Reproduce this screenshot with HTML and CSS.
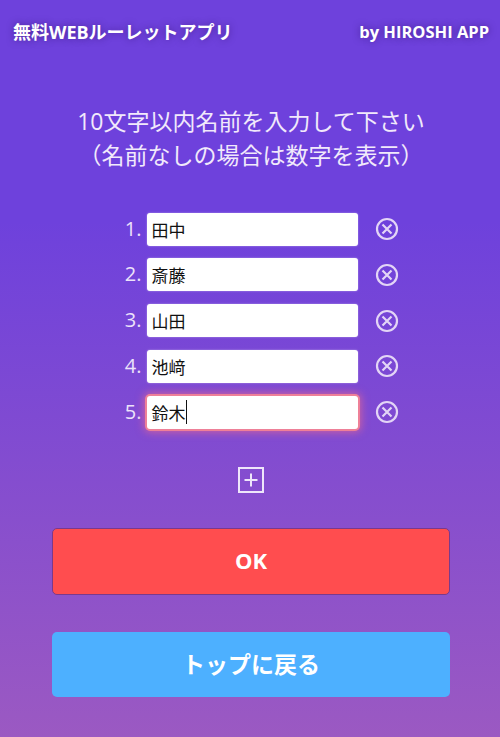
FILE: index.html
```html
<!DOCTYPE html>
<html lang="ja">
<head>
    <meta charset="UTF-8">
    <meta name="viewport" content="width=device-width, initial-scale=1.0">
    <title>無料WEBルーレットアプリ</title>
    <link rel="stylesheet" href="styles.css">
</head>
<body>
    <div class="container">
        <header class="header">
            <span class="title">無料WEBルーレットアプリ</span>
            <span class="author">by HIROSHI APP</span>
        </header>

        <p class="lead">10文字以内名前を入力して下さい<br>（名前なしの場合は数字を表示）</p>

        <div class="names">
            <div class="name-row">
                <span class="num">1.</span>
                <div class="name-input">田中</div>
                <svg class="remove" viewBox="0 0 24 24"><circle cx="12" cy="12" r="10"/><path d="M7.5 7.5l9 9M16.500 7.500l-9 9"/></svg>
            </div>
            <div class="name-row">
                <span class="num">2.</span>
                <div class="name-input">斎藤</div>
                <svg class="remove" viewBox="0 0 24 24"><circle cx="12" cy="12" r="10"/><path d="M7.5 7.5l9 9M16.500 7.500l-9 9"/></svg>
            </div>
            <div class="name-row">
                <span class="num">3.</span>
                <div class="name-input">山田</div>
                <svg class="remove" viewBox="0 0 24 24"><circle cx="12" cy="12" r="10"/><path d="M7.5 7.5l9 9M16.500 7.500l-9 9"/></svg>
            </div>
            <div class="name-row">
                <span class="num">4.</span>
                <div class="name-input">池﨑</div>
                <svg class="remove" viewBox="0 0 24 24"><circle cx="12" cy="12" r="10"/><path d="M7.5 7.5l9 9M16.500 7.500l-9 9"/></svg>
            </div>
            <div class="name-row">
                <span class="num">5.</span>
                <div class="name-input focused">鈴木<span class="caret"></span></div>
                <svg class="remove" viewBox="0 0 24 24"><circle cx="12" cy="12" r="10"/><path d="M7.5 7.5l9 9M16.500 7.500l-9 9"/></svg>
            </div>
        </div>

        <svg class="add" viewBox="0 0 26 26"><rect x="1" y="1" width="24" height="24"/><path d="M13 6.500v13M6.500 13h13"/></svg>

        <div class="btn btn-ok">OK</div>
        <div class="btn btn-back">トップに戻る</div>
    </div>
</body>
</html>
```

FILE: styles.css
```css
* {
    margin: 0;
    padding: 0;
    box-sizing: border-box;
}

body {
    height: 737px;
    overflow: hidden;
    background: linear-gradient(to bottom, #6e41dc 0%, #6e41dc 30%, #9b59c2 100%);
    font-family: 'Open Sans', 'Noto Sans CJK JP', sans-serif;
    color: #ffffff;
}

.container {
    display: flex;
    flex-direction: column;
    align-items: center;
    padding-left: 2px;
}

.header {
    display: flex;
    justify-content: space-between;
    align-items: center;
    width: 100%;
    height: 24px;
    margin-top: 19px;
    padding: 0 11px 0 11px;
    font-weight: 700;
    text-shadow: 0 0 7px rgba(40, 10, 90, 0.5);
}

.title {
    font-size: 18px;
}

.author {
    font-size: 16.500px;
}

.lead {
    margin-top: 61px;
    text-align: center;
    font-size: 23px;
    line-height: 34px;
    color: #f1e9fb;
}

.names {
    display: flex;
    flex-direction: column;
    gap: 12.750px;
    margin-top: 40.500px;
    margin-left: 13px;
}

.name-row {
    display: flex;
    align-items: center;
    height: 33px;
}

.num {
    width: 30px;
    padding-right: 5px;
    text-align: right;
    font-size: 20px;
    color: #ece2fa;
    margin-bottom: 2px;
}

.name-input {
    display: flex;
    align-items: center;
    width: 211px;
    height: 33px;
    padding-left: 5px;
    background-color: #ffffff;
    border-radius: 3px;
    box-shadow: 0 0 2px rgba(230, 220, 250, 0.6);
    color: #111111;
    font-size: 17px;
}

.focused {
    box-shadow: 0 0 0 2px #ee8098, 0 0 8px 3px rgba(228, 104, 148, 0.8);
}

.caret {
    width: 1px;
    height: 24px;
    background-color: #111111;
}

.remove {
    width: 24px;
    height: 24px;
    margin-left: 17px;
    fill: none;
    stroke: #e3d5f6;
    stroke-width: 2.200;
}

.add {
    width: 26px;
    height: 26px;
    margin-top: 38px;
    fill: none;
    stroke: #eee6fa;
    stroke-width: 2;
}

.btn {
    display: flex;
    align-items: center;
    justify-content: center;
    width: 398px;
    border-radius: 5px;
    font-weight: 700;
}

.btn-ok {
    height: 67px;
    margin-top: 35.500px;
    padding-bottom: 3px;
    background-color: #ff4d4f;
    border: 1.500px solid #7a3a8c;
    font-size: 22px;
}

.btn-back {
    height: 65px;
    margin-top: 37px;
    padding-bottom: 3px;
    background-color: #4db0ff;
    font-size: 23px;
}
```
